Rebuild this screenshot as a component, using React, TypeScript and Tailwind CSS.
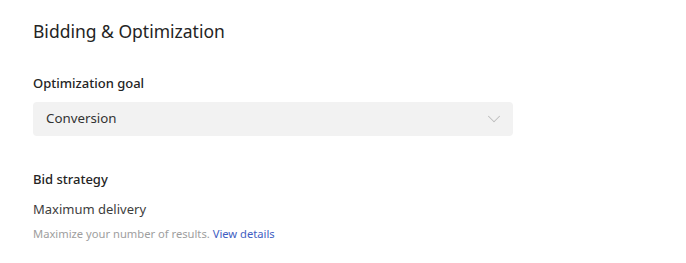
import { ChevronDown } from "lucide-react"

export default function App() {
  return (
    <div className="min-h-screen bg-white px-[33px] pt-[18px] font-['Noto_Sans',sans-serif] text-[#242424]">
      <h2 className="text-[17.5px] leading-[26px] font-normal">Bidding &amp; Optimization</h2>

      <div className="mt-[29px]">
        <label className="block text-[13px] leading-[20px] font-medium">Optimization goal</label>
        <div className="mt-[9px] flex h-[34px] w-[480px] items-center justify-between rounded-[4px] bg-[#f2f2f2] pl-[13px] pr-[8px]">
          <span className="text-[13.3px] text-[#333]">Conversion</span>
          <ChevronDown className="h-[22px] w-[22px] text-[#bcbcbc]" strokeWidth={1.1} />
        </div>
      </div>

      <div className="mt-[33px]">
        <div className="text-[13px] leading-[20px] font-medium">Bid strategy</div>
        <div className="mt-[10px] text-[13px] leading-[20px] text-[#3d3d3d]">Maximum delivery</div>
        <p className="mt-[7px] text-[11.2px] leading-[16px] text-[#9e9e9e]">
          Maximize your number of results. <a className="text-[#3f5ec2]">View details</a>
        </p>
      </div>
    </div>
  )
}
